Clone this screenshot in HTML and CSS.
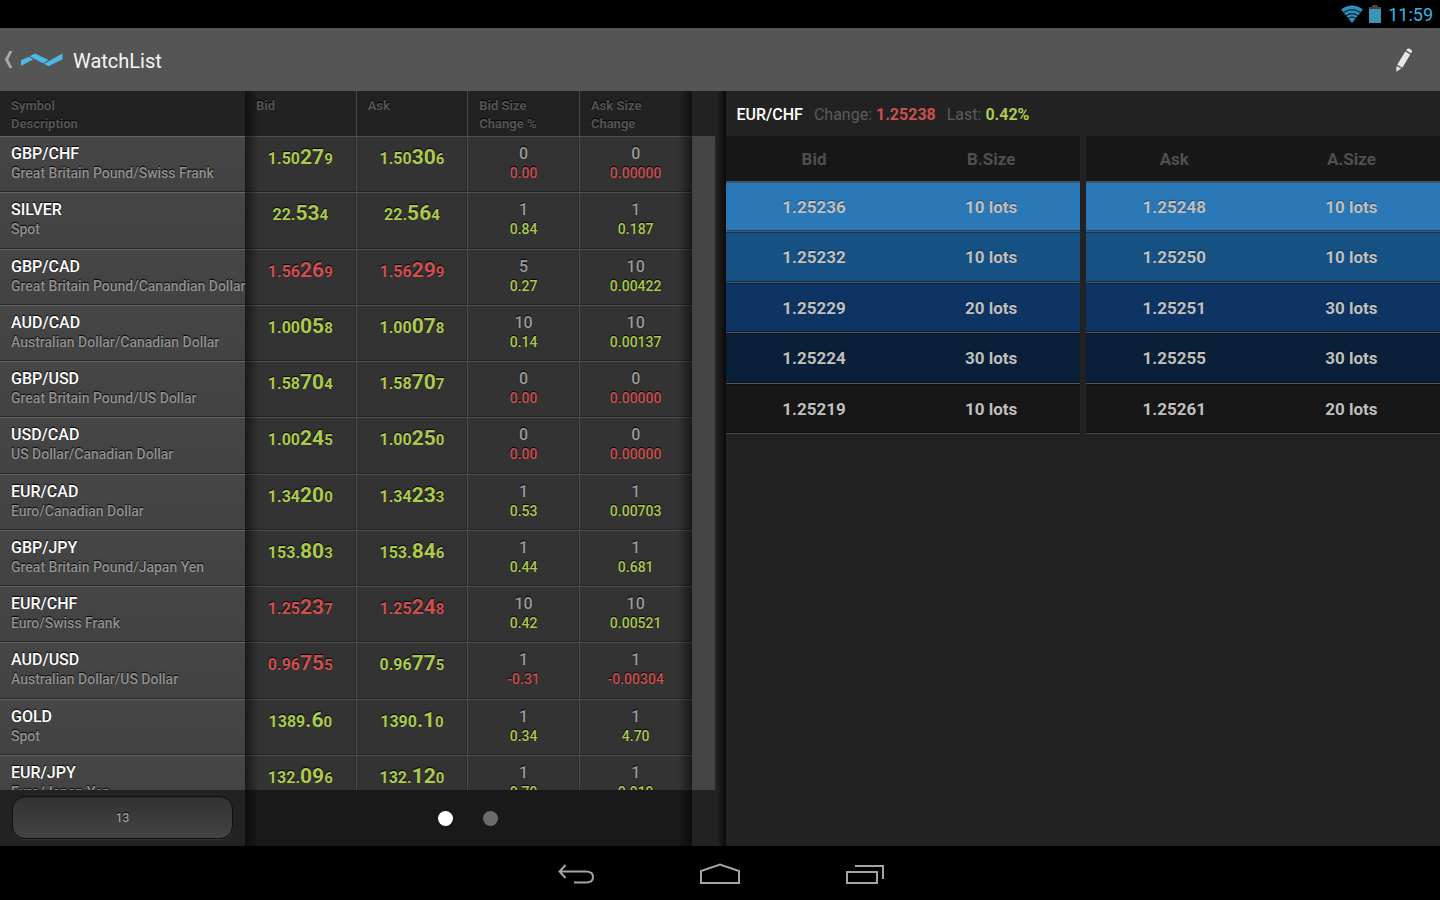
FILE: index.html
```html
<!DOCTYPE html>
<html lang="en">
<head>
<meta charset="utf-8">
<title>WatchList</title>
<link rel="stylesheet" href="styles.css">
</head>
<body>
<div class="status">
  <svg class="wifi" viewBox="0 0 22 18" width="22" height="18" aria-hidden="true"><path d="M0 4.500Q11-3.500 22 4.500L11 18Z" fill="#2b93bd"/><path d="M2.500 7.600Q11 1.500 19.500 7.600M5 10.800Q11 6.500 17 10.800M7.300 13.400Q11 11 14.700 13.400" fill="none" stroke="#0a2733" stroke-width="1.200"/></svg>
  <svg class="battery" viewBox="0 0 12 18" width="12" height="18" aria-hidden="true"><path d="M3 0h6v2h3v2H0V2h3z" fill="#4a4441"/><path d="M0 4h12v14H0z" fill="#3a93b8"/></svg>
  <time>11:59</time>
</div>
<header class="bar">
  <a class="back" href="#" aria-label="Back">
    <svg viewBox="0 0 9 17" width="9" height="17"><path d="M5.500 0H8.500L4.200 8.500 8.500 17H5.500L0.800 8.500Z" fill="#a9a9a9"/></svg>
    <svg viewBox="0 0 42 14" width="42" height="14"><path d="M0 7.300 7.500 3.900 12.200 6.300 0 13ZM8.500 3.200 14 0.400 27.500 7.100 22 10.300ZM23 10.800 41.500 0.500V6.300L27.500 13.200Z" fill="#4cb9ea"/></svg>
  </a>
  <h1>WatchList</h1>
  <button class="edit" type="button" aria-label="Edit watch list">
    <svg viewBox="0 0 18 24" width="18" height="24"><path d="M12.200 1Q13 0 14.200 0.600L16.400 1.900Q17.500 2.700 17 3.800L16.100 5.300 11 2.200ZM10.300 3.400 15.300 6.400 7.400 19.800 2.200 16.800ZM1.600 17.900 6.200 20.500 1.200 23.800Z" fill="#e6e6e6"/></svg>
  </button>
</header>
<main class="panes">
  <section class="watch" aria-label="Watch list">
    <div class="scroll">
      <table class="quotes">
        <thead><tr><th>Symbol<br>Description</th><th>Bid</th><th>Ask</th><th>Bid Size<br>Change %</th><th>Ask Size<br>Change</th></tr></thead>
        <tbody id="quotes"></tbody>
      </table>
      <div class="gutter"></div>
    </div>
    <footer class="foot">
      <div class="count"><button type="button">13</button></div>
      <nav class="dots" aria-label="Pages"><button class="dot on" type="button" aria-label="Page 1"></button><button class="dot" type="button" aria-label="Page 2"></button></nav>
      <div class="foot-end"></div>
    </footer>
    <div class="shade shade-left"></div>
    <div class="shade shade-right"></div>
  </section>
  <div class="divider"></div>
  <section class="depth" aria-label="Market depth">
    <div class="summary"><strong>EUR/CHF</strong><span>Change: <b class="down">1.25238</b></span><span>Last: <b class="up">0.42%</b></span></div>
    <div class="books">
      <table class="book">
        <thead><tr><th>Bid</th><th>B.Size</th></tr></thead>
        <tbody>
          <tr class="l1"><td>1.25236</td><td>10 lots</td></tr>
          <tr class="l2"><td>1.25232</td><td>10 lots</td></tr>
          <tr class="l3"><td>1.25229</td><td>20 lots</td></tr>
          <tr class="l4"><td>1.25224</td><td>30 lots</td></tr>
          <tr class="l5"><td>1.25219</td><td>10 lots</td></tr>
        </tbody>
      </table>
      <table class="book">
        <thead><tr><th>Ask</th><th>A.Size</th></tr></thead>
        <tbody>
          <tr class="l1"><td>1.25248</td><td>10 lots</td></tr>
          <tr class="l2"><td>1.25250</td><td>10 lots</td></tr>
          <tr class="l3"><td>1.25251</td><td>30 lots</td></tr>
          <tr class="l4"><td>1.25255</td><td>30 lots</td></tr>
          <tr class="l5"><td>1.25261</td><td>20 lots</td></tr>
        </tbody>
      </table>
    </div>
  </section>
</main>
<nav class="system" aria-label="System">
  <button type="button" aria-label="Back"><svg viewBox="0 0 40 24" width="40" height="24"><path d="M10.500 2 4.500 8.500 10.500 15M5 8.500H31Q38 8.500 38 14T31 19.500H19" fill="none" stroke="#a5a5a5" stroke-width="2"/></svg></button>
  <button type="button" aria-label="Home"><svg viewBox="0 0 42 24" width="42" height="24"><path d="M2 20V8L21 1.500 40 8V20Z" fill="none" stroke="#a5a5a5" stroke-width="2"/></svg></button>
  <button type="button" aria-label="Recent apps"><svg viewBox="0 0 40 24" width="40" height="24"><path d="M2 9H32V20H2ZM10 3H38V16" fill="none" stroke="#a5a5a5" stroke-width="2"/></svg></button>
</nav>
<script src="quotes.js"></script>
</body>
</html>
```
FILE: styles.css
```css
* { box-sizing: border-box; }
body {
  margin: 0;
  height: 100vh;
  display: flex;
  flex-direction: column;
  background: #000;
  color: #fff;
  font-family: Roboto, "Liberation Sans", sans-serif;
  overflow: hidden;
}
button { padding: 0; border: 0; background: none; font: inherit; color: inherit; cursor: pointer; }
svg { display: block; }
.status {
  height: 28px;
  flex: none;
  display: flex;
  align-items: center;
  justify-content: flex-end;
  gap: 6px;
  padding-right: 7px;
  color: #33b5e5;
  font-size: 18px;
}
.status time { padding: 1px 0 0 1px; line-height: 28px; }
.bar {
  height: 63px;
  flex: none;
  display: flex;
  align-items: center;
  padding: 0 27px 0 4px;
  background: #555;
}
.back { display: flex; align-items: center; gap: 8px; }
h1 { margin: 0 0 0 10px; font-size: 20px; font-weight: 400; line-height: 24px; padding-top: 2px; color: #f4f4f4; }
.edit { margin-left: auto; }
.panes { flex: 1; min-height: 0; display: grid; grid-template-columns: 1fr 11px 1fr; background: #222; }
.watch { position: relative; min-height: 0; min-width: 0; display: flex; flex-direction: column; }
.scroll { flex: 1; min-height: 0; overflow: hidden; display: flex; align-items: flex-start; }
.quotes {
  flex: 1;
  width: 100%;
  height: 720px;
  table-layout: fixed;
  border-collapse: separate;
  border-spacing: 0;
  text-shadow: 0 -1px 1px #000;
}
.quotes th {
  height: 45px;
  padding: 6px 0 0 11px;
  vertical-align: top;
  text-align: left;
  font-size: 13px;
  line-height: 18px;
  font-weight: 700;
  color: #555;
  border-right: 1px solid #484848;
  background: #222;
}
.quotes th:first-child { width: 245px; }
.quotes th:first-child, .quotes th:last-child, .quotes td:last-child { border-right: 0; }
.quotes td {
  padding: 7px 0 0;
  vertical-align: top;
  text-align: center;
  color: #9c9c9c;
  font-size: 16px;
  line-height: 20px;
  font-weight: 500;
  background: #333;
  border-top: 1px solid #505050;
  border-right: 1px solid #4c4c4c;
  box-shadow: inset 0 -1px #222, inset -1px 0 #2a2a2a;
}
.quotes tbody th {
  height: auto;
  padding: 7px 0 0 11px;
  font-size: 16px;
  line-height: 20px;
  font-weight: 500;
  color: #fff;
  white-space: nowrap;
  background: linear-gradient(#464646, #424242);
  border-top: 1px solid #666;
  box-shadow: inset 0 -1px #262626;
}
.quotes small { display: block; font-size: 14px; line-height: 19px; font-weight: 500; color: #929292; }
.quotes .price { font-size: 16px; line-height: 26px; font-weight: 700; }
.price b { font-size: 21px; font-weight: 700; }
.price i { font-size: 15px; font-style: normal; }
.quotes .up, .up { color: #acca4e; }
.quotes .down, .down { color: #cd5050; }
.gutter { flex: none; width: 23px; align-self: stretch; margin-top: 45px; background: #444; border-top: 1px solid #484848; }
.foot { flex: none; height: 56px; display: flex; background: #191919; }
.count { width: 245px; padding: 6px 12px 7px; background: #222; }
.count button {
  width: 100%;
  height: 43px;
  border: 1px solid #101010;
  border-radius: 13px;
  background: linear-gradient(#323232, #444);
  box-shadow: 0 1px #333, inset 0 1px #292929;
  color: #a0a0a0;
  font-size: 12px;
  font-weight: 500;
  text-shadow: 0 -1px 1px #000;
}
.dots { flex: 1; display: flex; align-items: center; justify-content: center; gap: 30px; }
.dot { width: 15px; height: 15px; border-radius: 50%; background: #6b6b6b; }
.dot.on { background: #fff; }
.foot-end { width: 23px; background: #222; }
.shade { position: absolute; top: 0; bottom: 0; width: 14px; pointer-events: none; }
.shade-left { left: 245px; background: linear-gradient(to right, rgba(0, 0, 0, .5), rgba(0, 0, 0, 0)); }
.shade-right { right: 23px; background: linear-gradient(to left, rgba(0, 0, 0, .5), rgba(0, 0, 0, 0)); }
.divider { background: linear-gradient(to right, #262626, #121212 75%, #080808); }
.depth { min-width: 0; }
.summary { height: 45px; display: flex; align-items: center; gap: 11px; padding: 2px 11px 0; font-size: 16px; color: #5c5c5c; }
.summary strong { font-weight: 500; color: #fff; }
.summary b { font-weight: 700; }
.books { display: grid; grid-template-columns: 1fr 1fr; gap: 6px; }
.book { width: 100%; height: 298px; table-layout: fixed; border-collapse: collapse; background: #171717; font-size: 17px; }
.book th { height: 45px; padding: 1px 0 0; font-weight: 700; color: #505050; }
.book td { padding: 1px 0 0; text-align: center; font-weight: 700; color: #bfbfbf; border-top: 1px solid #555; text-shadow: 0 -1px 1px rgba(0, 0, 0, .4); box-shadow: inset 0 -1px rgba(0, 0, 0, .4), inset 0 1px rgba(0, 0, 0, .3); }
.l1 { background: #2b78b7; }
.l2 { background: #155183; }
.l3 { background: #0d3462; }
.l4 { background: #0a2038; }
.l5 { background: #171717; }
.l5 td { border-bottom: 1px solid #484848; }
.system { height: 54px; flex: none; display: flex; align-items: center; justify-content: center; gap: 104px; }
.system button { padding-top: 4px; }
```
FILE: quotes.js
```js
const quotes = [
  ["GBP/CHF", "Great Britain Pound/Swiss Frank", "1.50|27|9", "1.50|30|6", "0", "0.00", "0", "0.00000", "uudd"],
  ["SILVER", "Spot", "22.|53|4", "22.|56|4", "1", "0.84", "1", "0.187", "uuuu"],
  ["GBP/CAD", "Great Britain Pound/Canandian Dollar", "1.56|26|9", "1.56|29|9", "5", "0.27", "10", "0.00422", "dduu"],
  ["AUD/CAD", "Australian Dollar/Canadian Dollar", "1.00|05|8", "1.00|07|8", "10", "0.14", "10", "0.00137", "uuuu"],
  ["GBP/USD", "Great Britain Pound/US Dollar", "1.58|70|4", "1.58|70|7", "0", "0.00", "0", "0.00000", "uudd"],
  ["USD/CAD", "US Dollar/Canadian Dollar", "1.00|24|5", "1.00|25|0", "0", "0.00", "0", "0.00000", "uudd"],
  ["EUR/CAD", "Euro/Canadian Dollar", "1.34|20|0", "1.34|23|3", "1", "0.53", "1", "0.00703", "uuuu"],
  ["GBP/JPY", "Great Britain Pound/Japan Yen", "153.|80|3", "153.|84|6", "1", "0.44", "1", "0.681", "uuuu"],
  ["EUR/CHF", "Euro/Swiss Frank", "1.25|23|7", "1.25|24|8", "10", "0.42", "10", "0.00521", "dduu"],
  ["AUD/USD", "Australian Dollar/US Dollar", "0.96|75|5", "0.96|77|5", "1", "-0.31", "1", "-0.00304", "dudd"],
  ["GOLD", "Spot", "1389|.6|0", "1390|.1|0", "1", "0.34", "1", "4.70", "uuuu"],
  ["EUR/JPY", "Euro/Japan Yen", "132.|09|6", "132.|12|0", "1", "0.79", "1", "0.919", "uuuu"],
];

const tone = (flag) => (flag === "u" ? "up" : "down");

const price = (value, flag) => {
  const [head, big, tail] = value.split("|");
  return `<td class="price ${tone(flag)}">${head}<b>${big}</b><i>${tail}</i></td>`;
};

const size = (lots, change, flag) =>
  `<td>${lots}<small class="${tone(flag)}">${change}</small></td>`;

document.getElementById("quotes").innerHTML = quotes
  .map(([symbol, name, bid, ask, bidSize, pct, askSize, change, t]) =>
    `<tr><th scope="row">${symbol}<small>${name}</small></th>` +
    price(bid, t[0]) + price(ask, t[1]) +
    size(bidSize, pct, t[2]) + size(askSize, change, t[3]) + "</tr>")
  .join("");
```
